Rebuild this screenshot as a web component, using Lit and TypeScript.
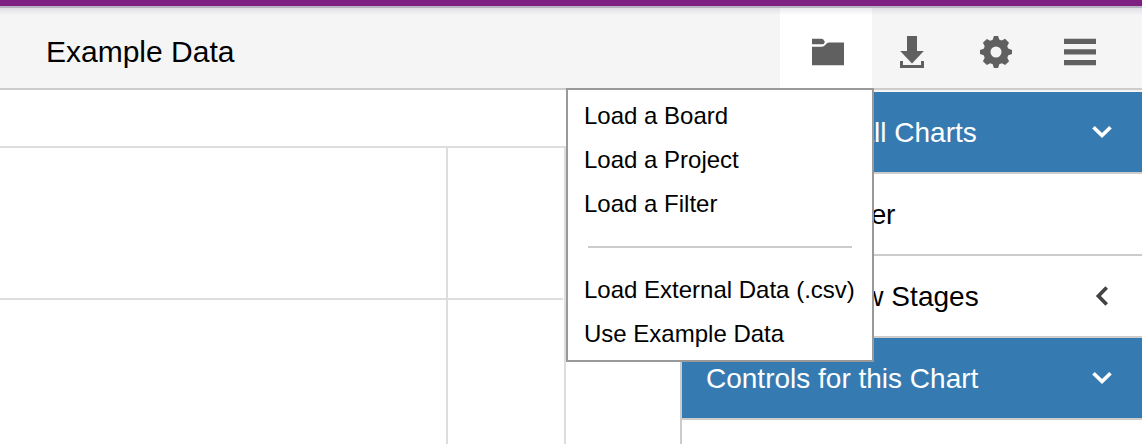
import { LitElement, html, css, svg } from "lit";
import { customElement } from "lit/decorators.js";

const folder = svg`<path d="M0 2.7h9.4q2 0 2.8 2.1l.7 1.2-1.4 2.2H0zM0 10.8h9.6q2.3 0 3.7-1.7l1.3-1.5q1-1.1 2.7-1.1H32v22.8H0z"/>`;
const download = svg`<path d="M11 0h10v15h6.8L16 27.5 4.2 15H11zM4 25h3v4h18v-4h3v7H4z"/>`;
const bars = svg`<path d="M0 2.8h32v5.2H0zM0 13.2h32v5.4H0zM0 24h32v5.2H0z"/>`;
const gear = svg`<path fill-rule="evenodd" d="M13.9 0h4.2l1.1 3.6 2.4 1 3.5-1.8 3.9 3.9-1.8 3.5 1 2.4L32 13.9v4.2l-3.7 1.2-1 2.4 1.8 3.5-3.9 3.9-3.5-1.8-2.4 1L18.1 32h-4.2l-1.2-3.7-2.4-1-3.5 1.8-3.9-3.9 1.8-3.5-1-2.4L0 18.1v-4.2l3.7-1.2 1-2.4-1.8-3.5 3.9-3.9 3.5 1.8 2.4-1zM16 10.5a5.5 5.5 0 1 0 0 11a5.5 5.5 0 1 0 0-11z"/>`;

@customElement("app-root")
export class AppRoot extends LitElement {
  static styles = css`
    :host {
      display: flex;
      flex-direction: column;
      height: 444px;
      overflow: hidden;
      position: relative;
      background: #fff;
      color: #000;
      font-family: "Liberation Sans", Arial, sans-serif;
    }
    .stripe { height: 6px; flex: none; background: #7d2082; border-bottom: 2px solid #b8b3c1; }
    header {
      height: 80px;
      flex: none;
      display: flex;
      background: #f5f5f5;
      border-bottom: 2px solid #ccc;
      position: relative;
    }
    header::after {
      content: "";
      position: absolute;
      inset: 0 0 auto;
      height: 7px;
      background: linear-gradient(rgba(110, 110, 150, 0.16), rgba(110, 110, 150, 0));
    }
    h1 { margin: 0; flex: 1; padding-left: 46px; font-size: 30px; font-weight: 400; line-height: 87px; }
    .tool { width: 88px; display: flex; justify-content: center; padding-top: 28px; box-sizing: border-box; }
    .tool.open { width: 92px; background: #fff; padding-left: 4px; }
    .tool.dl { width: 80px; }
    .tool.last { width: 80px; margin-right: 22px; }
    .tool svg { width: 32px; height: 32px; fill: #606060; }
    main { flex: 1; display: flex; min-height: 0; }
    .chart { width: 566px; display: flex; padding-top: 56px; box-sizing: border-box; }
    .grid {
      flex: 1;
      display: grid;
      grid-template-columns: 446px 1fr;
      grid-template-rows: 152px 1fr;
      border-top: 2px solid #ddd;
      border-right: 2px solid #ddd;
    }
    .cell.top { border-bottom: 2px solid #ddd; }
    .cell.right { border-left: 2px solid #ddd; }
    .cell.right.top { margin-right: 1px; }
    aside { margin-left: auto; width: 460px; border-left: 2px solid #ccc; border-top: 2px solid #f5f5f5; }
    .row {
      height: 80px;
      border-bottom: 2px solid #ccc;
      display: flex;
      align-items: center;
      justify-content: space-between;
      padding: 0 30px 0 24px;
      font-size: 28px;
    }
    .row span { padding-top: 2px; }
    .row .tight { letter-spacing: -0.2px; }
    .row .loose { letter-spacing: 0.05px; }
    .row.blue { background: #357bb2; color: #fff; }
    .row svg { width: 20px; height: 20px; fill: none; stroke: #444; stroke-width: 3.7; }
    .row.blue svg { stroke: #fff; }
    .menu {
      position: absolute;
      left: 566px;
      top: 88px;
      width: 308px;
      height: 274px;
      box-sizing: border-box;
      border: 2px solid #999;
      background: #fff;
      padding: 4px 16px;
      font-size: 24px;
      line-height: 44px;
      white-space: nowrap;
    }
    .rule { height: 2px; background: #ccc; margin: 20px 4px; }
  `;

  private icon(shape: unknown) {
    return html`<svg viewBox="0 0 32 32">${shape}</svg>`;
  }

  private chevron(down: boolean) {
    return html`<svg viewBox="0 0 20 20">
      <path d=${down ? "M1.5 5.2L10 13.5L18.5 5.2" : "M14.7 1.5L6.4 10L14.7 18.5"} />
    </svg>`;
  }

  render() {
    return html`
      <div class="stripe"></div>
      <header>
        <h1>Example Data</h1>
        <div class="tool open">${this.icon(folder)}</div>
        <div class="tool dl">${this.icon(download)}</div>
        <div class="tool">${this.icon(gear)}</div>
        <div class="tool last">${this.icon(bars)}</div>
      </header>
      <main>
        <div class="chart">
          <div class="grid">
            <div class="cell top"></div>
            <div class="cell top right"></div>
            <div class="cell"></div>
            <div class="cell right"></div>
          </div>
        </div>
        <aside>
          <div class="row blue"><span>Controls for all Charts</span>${this.chevron(true)}</div>
          <div class="row"><span class="tight">Item Type Filter</span></div>
          <div class="row"><span class="loose">Item Workflow Stages</span>${this.chevron(false)}</div>
          <div class="row blue"><span>Controls for this Chart</span>${this.chevron(true)}</div>
        </aside>
      </main>
      <nav class="menu">
        <div>Load a Board</div>
        <div>Load a Project</div>
        <div>Load a Filter</div>
        <div class="rule"></div>
        <div>Load External Data (.csv)</div>
        <div>Use Example Data</div>
      </nav>
    `;
  }
}
